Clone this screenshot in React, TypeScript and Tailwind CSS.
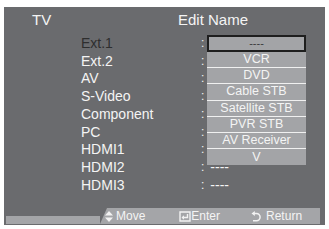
import React from 'react';

const ROWS: ReadonlyArray<{ label: string; value?: string }> = [
	{ label: 'Ext.1' },
	{ label: 'Ext.2' },
	{ label: 'AV' },
	{ label: 'S-Video' },
	{ label: 'Component' },
	{ label: 'PC' },
	{ label: 'HDMI1' },
	{ label: 'HDMI2', value: '----' },
	{ label: 'HDMI3', value: '----' }
];

const OPTIONS = ['VCR', 'DVD', 'Cable STB', 'Satellite STB', 'PVR STB', 'AV Receiver', 'V'];

function MoveIcon() {
	return (
		<svg width="8" height="11" viewBox="0 0 8 11" className="shrink-0">
			<path d="M4 0 L8 4.6 L0 4.6 Z" fill="#f2f2f2" />
			<path d="M0 6.4 L8 6.4 L4 11 Z" fill="#f2f2f2" />
		</svg>
	);
}

function EnterIcon() {
	return (
		<svg width="12" height="11" viewBox="0 0 12 11" className="shrink-0">
			<path d="M1 1 H11 V10 H1 Z" fill="none" stroke="#f2f2f2" strokeWidth="1.4" />
			<path d="M8.5 3 V6.5 H3.5" fill="none" stroke="#f2f2f2" strokeWidth="1.4" />
			<path d="M2.5 6.5 L5 4.3 L5 8.7 Z" fill="#f2f2f2" />
		</svg>
	);
}

function ReturnIcon() {
	return (
		<svg width="10" height="11" viewBox="0 0 10 11" className="shrink-0">
			<path d="M3 2.5 H5.5 A3.6 3.6 0 0 1 5.5 9.7 H2" fill="none" stroke="#f2f2f2" strokeWidth="1.5" />
			<path d="M0.5 2.5 L3.8 0 L3.8 5 Z" fill="#f2f2f2" />
		</svg>
	);
}

export default function App() {
	return (
		<div className="h-[229px] w-[329px] bg-white pl-[4px] pt-[7px] font-['Liberation_Sans',Arial,sans-serif]">
			<div className="relative flex h-[218px] w-[321px] flex-col bg-[#6a6b6e] text-[#f4f4f4]">
				<div className="mt-[4px] flex h-[18px] items-center text-[15px] leading-[18px]">
					<span className="ml-[28px] w-[146px]">TV</span>
					<span>Edit Name</span>
				</div>

				<div className="mt-[5px] flex flex-col pl-[77px] text-[14px] leading-[16px]">
					{ROWS.map((row, idx) => (
						<div key={row.label} className="flex h-[17.75px] items-center">
							<span className={`w-[120px] ${idx === 0 ? 'text-[#2e2e2e]' : ''}`}>{row.label}</span>
							<span className="text-[12px]">:</span>
							{row.value ? <span className="ml-[6px] text-[14px]">{row.value}</span> : null}
						</div>
					))}
				</div>

				<div className="absolute left-[203px] top-[28px] flex w-[99px] flex-col bg-[#a3a4a7] text-center text-[12.5px] leading-[15px]">
					<div className="flex h-[17px] items-center justify-center border-2 border-[#1e1e1e] text-[11px] text-[#3a3a3a]">
						----
					</div>
					{OPTIONS.map((opt, idx) => (
						<div
							key={opt}
							className={`flex h-[16.2px] items-center justify-center ${
								idx < OPTIONS.length - 1 ? 'border-b border-[#f0f0f0]' : ''
							}`}
						>
							{opt}
						</div>
					))}
				</div>

				<div className="mt-auto mb-[1px] flex items-end pl-[2px] pr-[5px]">
					<div className="h-[8px] flex-1 bg-[#a4a5a8]" />
					<div className="flex h-[16px] w-[220px] items-center bg-[#a4a5a8] pl-[5px] text-[12px] leading-[14px] [clip-path:polygon(7px_0,100%_0,100%_100%,0_100%)]">
						<MoveIcon />
						<span className="ml-[3px]">Move</span>
						<span className="ml-[34px]">
							<EnterIcon />
						</span>
						<span>Enter</span>
						<span className="ml-[31px]">
							<ReturnIcon />
						</span>
						<span className="ml-[5px]">Return</span>
					</div>
				</div>
			</div>
		</div>
	);
}
